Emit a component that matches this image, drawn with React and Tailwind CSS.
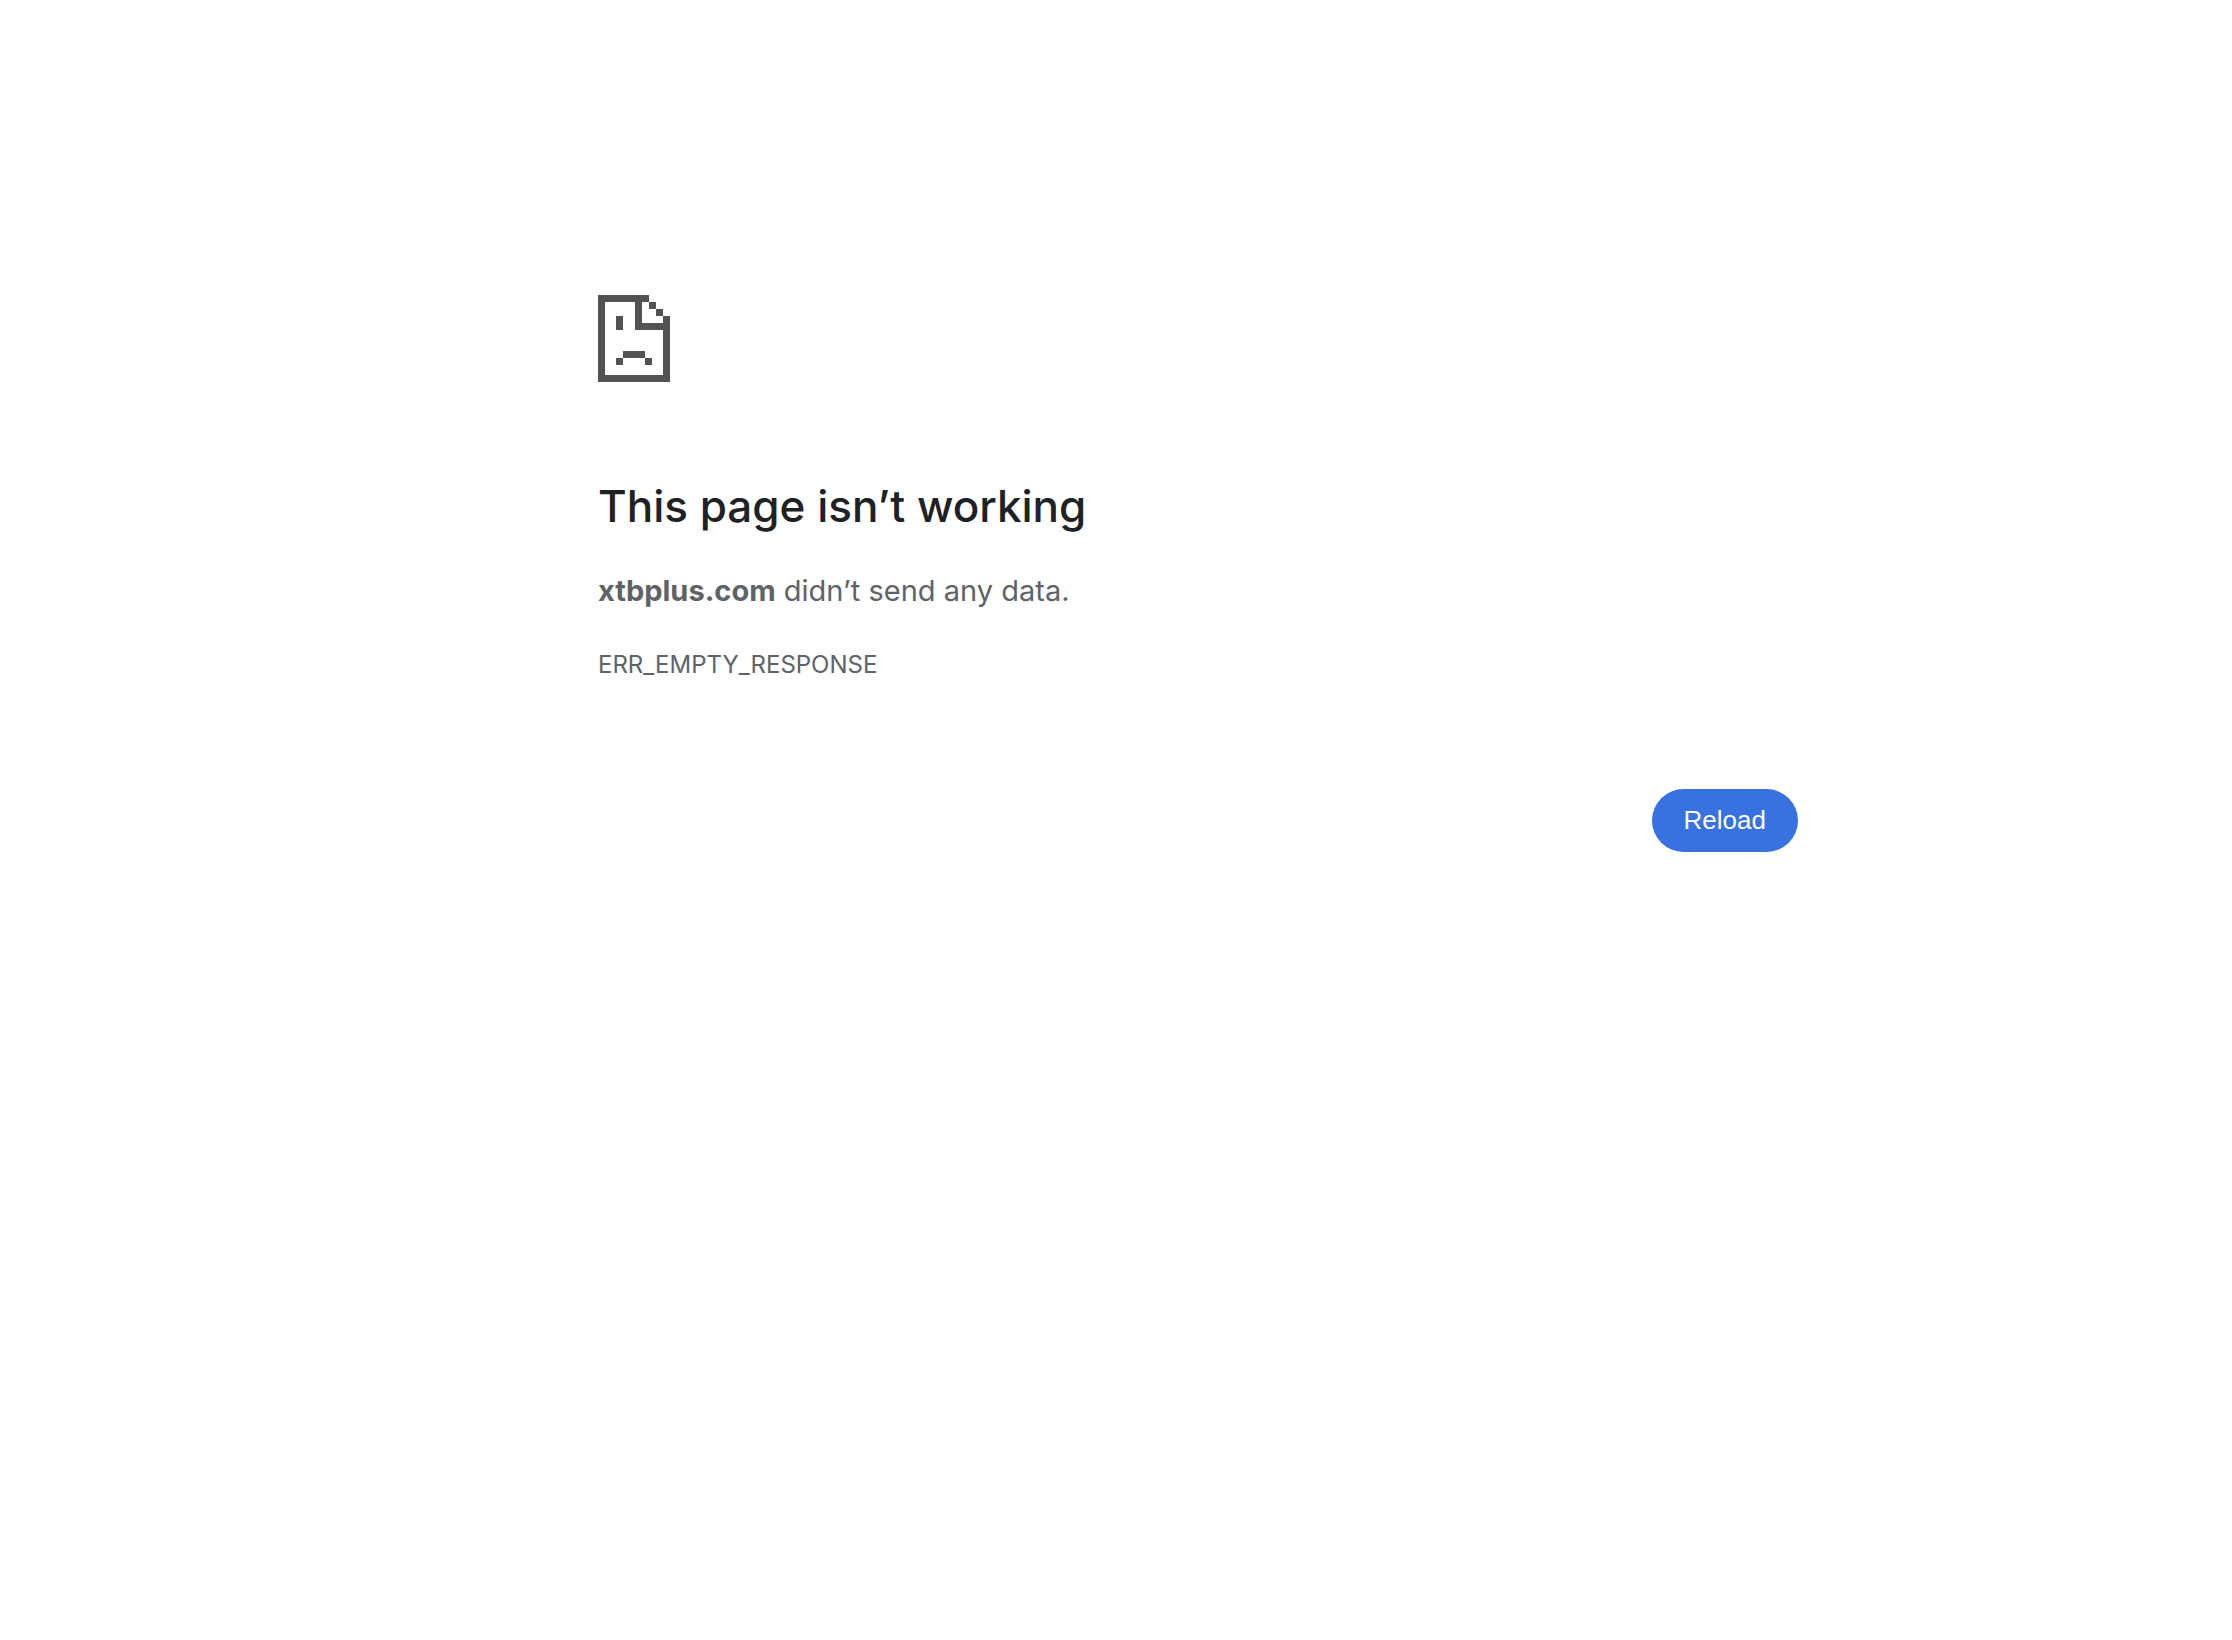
import React from 'react';

const errorInfo = {
  host: 'xtbplus.com',
  title: 'This page isn’t working',
  summary: 'didn’t send any data.',
  code: 'ERR_EMPTY_RESPONSE',
};

// Sad page, drawn as blocks
const SadPageIcon = () => (
  <svg
    className="block h-[87px] w-[72px] fill-[#535353]"
    viewBox="0 0 72 87"
    shapeRendering="crispEdges"
    aria-hidden="true"
  >
    {/* outline */}
    <path d="M0 0h51v7H7v73h58V35H37V7h7v21h21v-7h7v66H0z" />
    {/* folded corner */}
    <path d="M51 7h7v7h-7zM58 14h7v7h-7z" />
    {/* eye and mouth */}
    <path d="M18 21h7v14h-7zM25 56h22v7H25zM18 63h7v7h-7zM47 63h7v7h-7z" />
  </svg>
);

const ReloadButton = () => (
  <button
    type="button"
    onClick={() => window.location.reload()}
    className="cursor-pointer rounded-full bg-[#3871e0] px-8 py-4 font-['Liberation_Sans',Arial,sans-serif] text-[26px] leading-[31px] text-white"
  >
    Reload
  </button>
);

export default function App() {
  return (
    <div className="flex min-h-screen justify-center bg-white px-6 pt-[295px] font-[Inter,sans-serif] text-[#5f6368] lg:pl-[188px]">
      <main className="w-full max-w-[1200px]">
        <SadPageIcon />
        <h1 className="mt-24 text-[44px] leading-[56px] font-medium text-[#202124]">
          {errorInfo.title}
        </h1>
        <p className="mt-8 text-[29px] leading-[50px]">
          <strong className="font-bold">{errorInfo.host}</strong> {errorInfo.summary}
        </p>
        <p className="mt-8 text-2xl leading-[34px]">{errorInfo.code}</p>
        <div className="mt-[107px] flex justify-end">
          <ReloadButton />
        </div>
      </main>
    </div>
  );
}
